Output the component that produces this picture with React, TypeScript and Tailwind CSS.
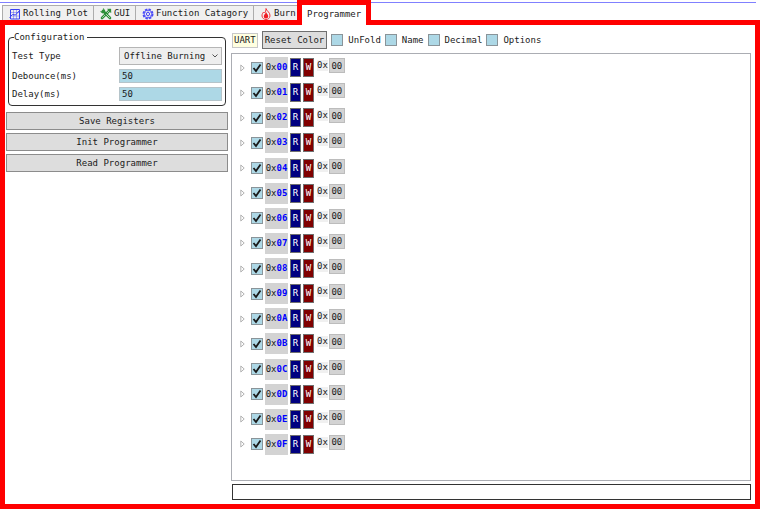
import { useState, type ReactNode } from "react";

const ADDRESSES = [
  "00", "01", "02", "03", "04", "05", "06", "07",
  "08", "09", "0A", "0B", "0C", "0D", "0E", "0F",
];

function PlotIcon() {
  return (
    <svg viewBox="0 0 12 12" className="size-3 shrink-0" fill="none" stroke="#3a42f0" strokeWidth="1">
      <path d="M1.500 1.500h9v9.500h-9z" />
      <path d="M1.500 4.500h9M1.500 8h9M4.500 1.500v9.500M7.500 1.500v9.500" strokeWidth="0.400" />
      <path d="M0.500 9.500l3-3 3 .5 4.500-5" />
    </svg>
  );
}

function ToolsIcon() {
  return (
    <svg viewBox="0 0 12 12" className="size-3 shrink-0" fill="none" stroke="#2f8f3a" strokeLinecap="round">
      <path d="M10 2L2 10" strokeWidth="2.600" />
      <path d="M9.500 2.500l-7 7" stroke="#e4f2e4" strokeWidth="0.700" />
      <path d="M3 3l7 7" strokeWidth="2.600" />
      <path d="M6.500 6.500l3 3" stroke="#e4f2e4" strokeWidth="0.800" />
      <path d="M1 3.500l1.500 1.200L4.700 3 3.500 1" strokeWidth="1.200" />
      <path d="M8 1.200l2.800 2.800" strokeWidth="1.200" />
    </svg>
  );
}

function FunctionIcon() {
  return (
    <svg viewBox="0 0 12 12" className="size-3 shrink-0" fill="none" stroke="#4a4af8">
      <circle cx="6" cy="6" r="4.700" strokeWidth="1.600" strokeDasharray="2.400 1.290" />
      <circle cx="6" cy="6" r="3.900" strokeWidth="0.900" />
      <circle cx="6" cy="6" r="1.600" />
      <path d="M6 2v2.400M6 7.600V10M2.500 4l2.100 1.200M7.400 6.800L9.500 8M2.500 8l2.100-1.200M7.400 5.200L9.500 4" strokeWidth="0.500" />
    </svg>
  );
}

function FlameIcon() {
  return (
    <svg viewBox="0 0 12 12" className="size-3 shrink-0" fill="none">
      <path d="M6 0.500C6.500 3 10.500 4.500 10 8c-.3 2.300-2 3.500-4 3.500S2.200 10 2 8c-.2-2 1-3 1.500-4l1 1C5.500 4 6 2.500 6 .500z" stroke="#f2323a" />
      <path d="M6 4c.5 1.500 2.200 2.500 2.200 4.300 0 1.400-1 2.200-2.200 2.200s-2.200-.8-2.200-2.200C3.800 6.700 5.500 6 6 4z" fill="#ee1c24" />
    </svg>
  );
}

function Tab({ icon, className, children }: { icon: ReactNode; className: string; children: ReactNode }) {
  return (
    <button
      type="button"
      role="tab"
      aria-selected={false}
      className={`mt-0.5 flex items-center gap-0.5 overflow-hidden border-t border-l border-[#acacac] bg-[#f0f0f0] pt-px pl-1.5 whitespace-nowrap ${className}`}
    >
      {icon}
      <span>{children}</span>
    </button>
  );
}

function Tick({ label, defaultChecked }: { label: string; defaultChecked?: boolean }) {
  return (
    <span className="grid size-3 shrink-0">
      <input
        type="checkbox"
        aria-label={label}
        defaultChecked={defaultChecked}
        className="peer col-start-1 row-start-1 size-3 appearance-none border border-[#8a9499] bg-[#add8e6]"
      />
      <svg
        viewBox="0 0 12 12"
        className="pointer-events-none invisible col-start-1 row-start-1 size-3 peer-checked:visible"
        fill="none"
        stroke="#1a1a1a"
        strokeWidth="1.800"
      >
        <path d="M2.500 6l2.500 3L9.500 2.500" />
      </svg>
    </span>
  );
}

function Option({ children }: { children: string }) {
  return (
    <label className="flex items-center gap-[5px]">
      <Tick label={children} />
      {children}
    </label>
  );
}

function ActionButton({ children }: { children: string }) {
  return (
    <button type="button" className="h-[18px] w-full border border-[#8c8c8c] bg-[#dddddd]">
      {children}
    </button>
  );
}

function RegisterRow({ address }: { address: string }) {
  return (
    <li className="flex h-[21px] items-center">
      <button type="button" aria-label={`Expand 0x${address}`} className="mr-1.5 w-[5px]">
        <svg viewBox="0 0 5 8" className="h-2 w-[5px]" fill="none" stroke="#a0a0a0" strokeWidth="0.800">
          <path d="M.8 1v6l3.400-3z" />
        </svg>
      </button>
      <Tick label={`Select 0x${address}`} defaultChecked />
      <span className="ml-0.5 flex h-full w-[23px] items-center justify-center bg-[#d3d3d3]">
        0x<b className="text-[#0000ff]">{address}</b>
      </span>
      <button type="button" className="ml-0.5 h-[19px] w-[11px] border border-[#707070] bg-[#000080] text-white">
        R
      </button>
      <button type="button" className="ml-0.5 h-[19px] w-[11px] border border-[#707070] bg-[#800000] text-white">
        W
      </button>
      <label className="ml-[3px] flex items-center self-start pt-px">
        <span className="bg-[#f0f0f0]">0x</span>
        <input
          type="text"
          defaultValue="00"
          className="ml-px h-[15px] w-4 border border-[#bcbcbc] bg-[#d3d3d3] text-center"
        />
      </label>
    </li>
  );
}

export default function App() {
  const [command, setCommand] = useState("");

  return (
    <div className="flex min-h-screen flex-col bg-white pr-px pb-1 font-['DejaVu_Sans_Mono',monospace] text-[9px] leading-[11px] text-[#1a1a1a]">
      <header role="tablist" className="mt-0.5 mr-1 flex h-[18px] items-stretch border-t border-[#8080ff] pl-0.5">
        <Tab icon={<PlotIcon />} className="w-[91px]">Rolling Plot</Tab>
        <Tab icon={<ToolsIcon />} className="w-[42px]">GUI</Tab>
        <Tab icon={<FunctionIcon />} className="w-[118px]">Function Catagory</Tab>
        <Tab icon={<FlameIcon />} className="w-[44px]">Burn</Tab>
        <button
          type="button"
          role="tab"
          aria-selected
          className="z-10 -mt-[3px] -mb-[5px] border-x-[5px] border-t-[5px] border-[#ff0000] bg-white px-[5px] pb-0.5"
        >
          Programmer
        </button>
      </header>

      <main className="flex flex-1 gap-[3px] border-[5px] border-[#ff0000] pt-1.5 pr-1 pb-1 pl-px">
        <section className="flex w-[222px] shrink-0 flex-col gap-[3px]">
          <fieldset className="mx-0.5 mt-px mb-[3px] rounded-[4px] border border-[#333333] px-[3px] pb-1">
            <legend className="ml-0.5 pr-[3px]">Configuration</legend>
            <div className="grid grid-cols-[107px_1fr] items-center gap-y-1 pt-1">
              <label htmlFor="test-type">Test Type</label>
              <div className="grid items-center">
                <select
                  id="test-type"
                  className="col-start-1 row-start-1 h-[18px] appearance-none border border-[#b5b5b5] bg-[#eeeeee] pl-1"
                >
                  <option>Offline Burning</option>
                  <option>Online Burning</option>
                </select>
                <svg
                  viewBox="0 0 6 4"
                  className="pointer-events-none col-start-1 row-start-1 mr-1 h-1 w-1.5 justify-self-end"
                  fill="none"
                  stroke="#555"
                >
                  <path d="M.5.5L3 3 5.500.5" />
                </svg>
              </div>
              <label htmlFor="debounce">Debounce(ms)</label>
              <input id="debounce" defaultValue="50" className="h-3.5 w-full border border-[#b5c4ca] bg-[#add8e6] pl-0.5" />
              <label htmlFor="delay">Delay(ms)</label>
              <input id="delay" defaultValue="50" className="h-3.5 w-full border border-[#b5c4ca] bg-[#add8e6] pl-0.5" />
            </div>
          </fieldset>
          <ActionButton>Save Registers</ActionButton>
          <ActionButton>Init Programmer</ActionButton>
          <ActionButton>Read Programmer</ActionButton>
        </section>

        <section className="flex min-w-0 flex-1 flex-col">
          <div className="flex h-[18px] items-center gap-1 pl-px">
            <span className="border border-[#c8c8c8] bg-[#ffffe0] px-px py-px">UART</span>
            <button type="button" className="h-[18px] border border-[#707070] bg-[#dddddd] px-0.5">
              Reset Color
            </button>
            <Option>UnFold</Option>
            <Option>Name</Option>
            <Option>Decimal</Option>
            <Option>Options</Option>
          </div>
          <ul className="mt-1 flex flex-1 flex-col justify-between border border-[#abadb3] pt-[3px] pb-[25px] pl-2">
            {ADDRESSES.map((address) => (
              <RegisterRow key={address} address={address} />
            ))}
          </ul>
          <input
            type="text"
            aria-label="Command"
            value={command}
            onChange={(event) => setCommand(event.target.value)}
            className="mt-[3px] ml-px h-4 border border-[#333333] bg-white px-1"
          />
        </section>
      </main>
    </div>
  );
}
